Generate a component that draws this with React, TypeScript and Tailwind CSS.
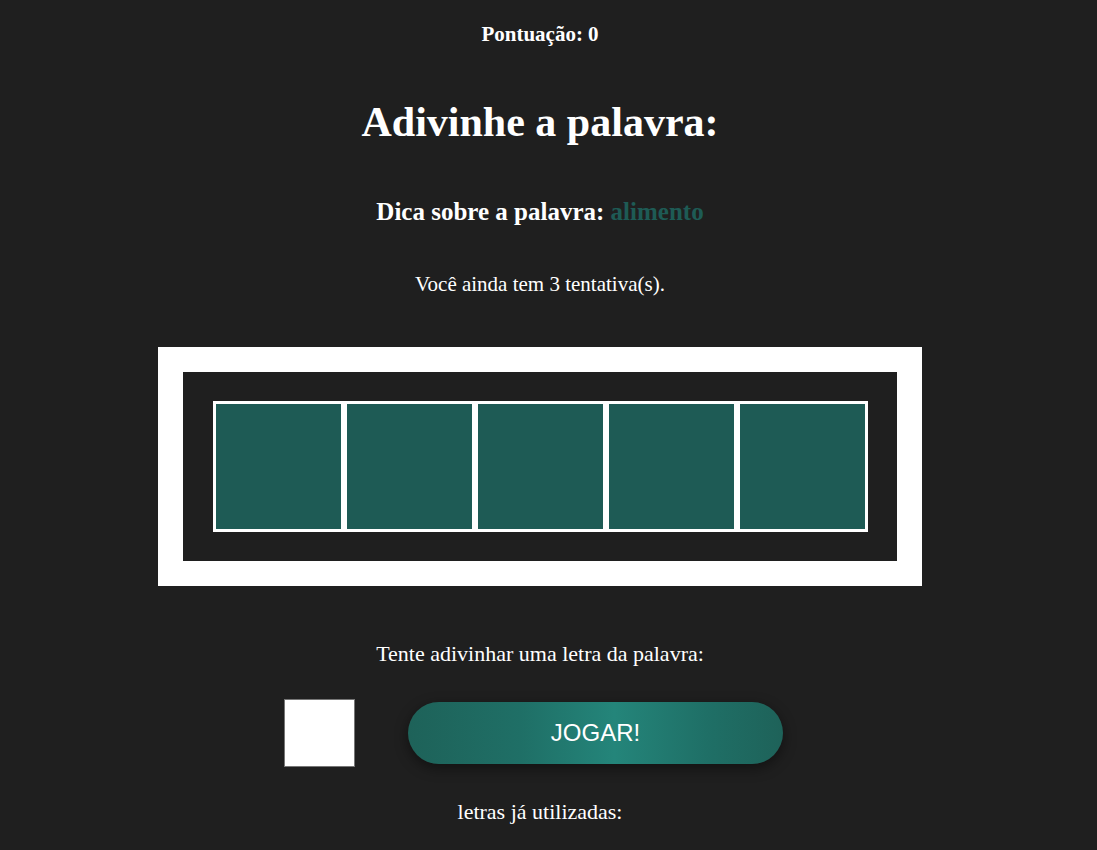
export default function App() {
  const letters = ["", "", "", "", ""]

  return (
    <div className="min-h-[850px] bg-[#1f1f1f] text-white" style={{ fontFamily: '"Liberation Serif", "DejaVu Serif", serif' }}>
      <div className="w-[1080px] flex flex-col items-center">
        <p className="mt-[22px] text-[21px] font-bold leading-[24px]">Pontuação: 0</p>

        <h1 className="mt-[50px] text-[42px] font-bold leading-[52px]">Adivinhe a palavra:</h1>

        <p className="mt-[50px] text-[25px] font-bold leading-[28px]">
          Dica sobre a palavra: <span className="text-[#1e5b55]">alimento</span>
        </p>

        <p className="mt-[46px] text-[21px] leading-[24px]">Você ainda tem 3 tentativa(s).</p>

        <div className="mt-[51px] w-[764px] border-[25px] border-white bg-[#1f1f1f] flex justify-center py-[29px]">
          <div className="flex gap-[6px] bg-white p-[3px]">
            {letters.map((l, i) => (
              <div key={i} className="w-[125px] h-[125px] bg-[#1e5b55] flex items-center justify-center text-[48px]">
                {l}
              </div>
            ))}
          </div>
        </div>

        <p className="mt-[55px] text-[22px] leading-[26px]">Tente adivinhar uma letra da palavra:</p>

        <div className="mt-[32px] flex items-center gap-[53px] pr-[13px]">
          <input
            type="text"
            maxLength={1}
            className="w-[71px] h-[68px] bg-white border border-[#767676] text-black text-center text-[32px] outline-none"
          />
          <button
            className="w-[375px] h-[62px] rounded-full text-white text-[24px] shadow-[0_4px_14px_rgba(0,0,0,0.45)] bg-[linear-gradient(to_right,#1e6259,#1f6f66_30%,#24857a_55%,#1f6f66_80%,#1e6259)]"
            style={{ fontFamily: '"Liberation Sans", Arial, sans-serif' }}
          >
            JOGAR!
          </button>
        </div>

        <p className="mt-[32px] text-[22px] leading-[26px]">letras já utilizadas:</p>
      </div>
    </div>
  )
}
